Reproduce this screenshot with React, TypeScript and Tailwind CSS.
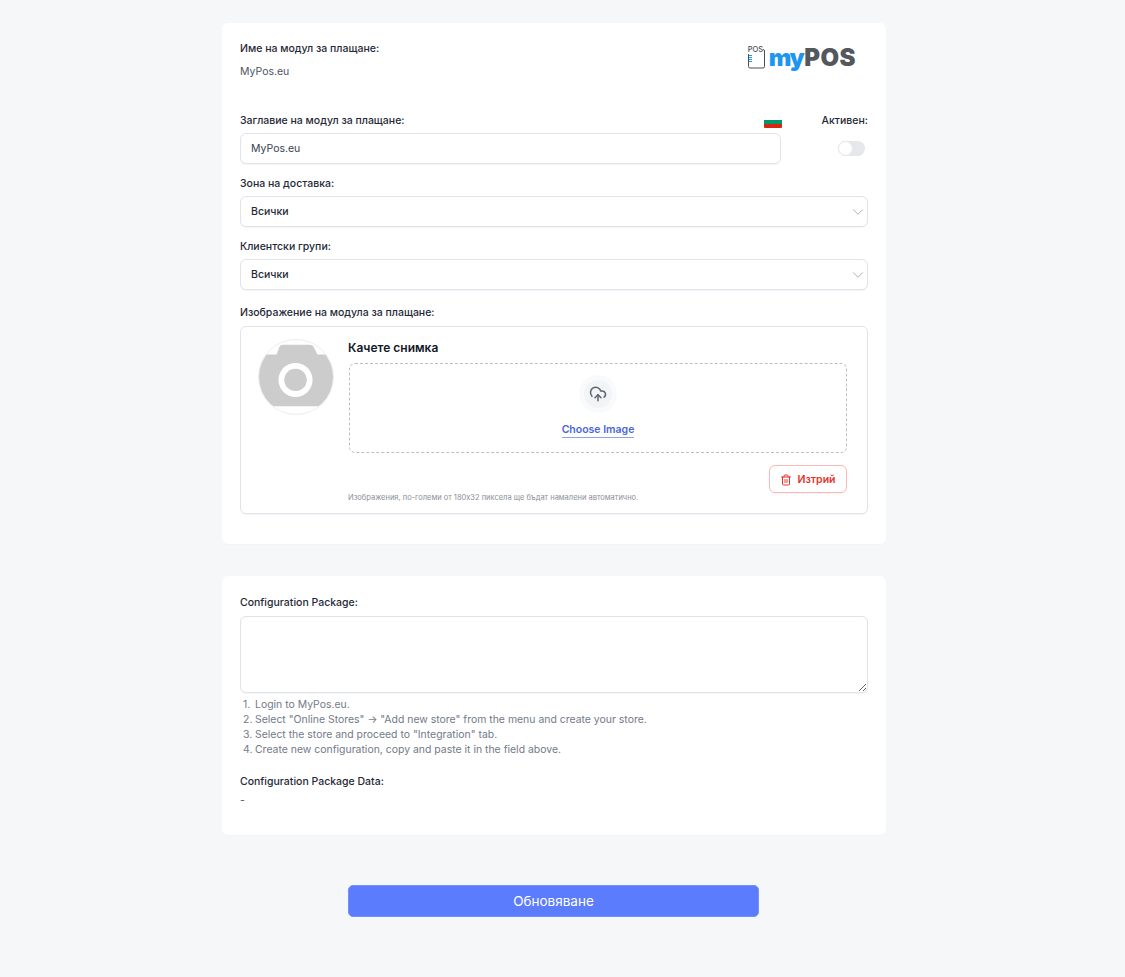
import { ChevronDown, CloudUpload, Trash2 } from 'lucide-react';

const steps = [
  'Login to MyPos.eu.',
  'Select "Online Stores" → "Add new store" from the menu and create your store.',
  'Select the store and proceed to "Integration" tab.',
  'Create new configuration, copy and paste it in the field above.',
];

function Label({ children }: { children: React.ReactNode }) {
  return <div className="h-[16px] text-[10.5px] leading-[18px] font-medium text-[#1f2937]">{children}</div>;
}

function SelectBox({ label }: { label: string }) {
  return (
    <div className="mb-[11px]">
      <Label>{label}</Label>
      <div className="mt-[5px] h-[31px] flex items-center justify-between pl-[10px] bg-white border border-[#e0e3eb] rounded-[6px] shadow-[0_1px_1px_rgba(0,0,0,0.04)]">
        <span className="text-[10.5px] font-medium text-[#1f2937]">Всички</span>
        <ChevronDown className="w-[18px] h-[18px] text-[#a9aeb8]" strokeWidth={1.3} />
      </div>
    </div>
  );
}

function Logo() {
  return (
    <div className="flex items-center self-start mr-[12px] mt-[4px]">
      <div className="relative w-[17px] h-[22px]">
        <svg viewBox="0 0 17 22" className="w-[17px] h-[22px]">
          <rect x="0.5" y="2.5" width="16" height="18.5" rx="1.5" fill="white" stroke="#4b4f54" strokeWidth="1" />
          <path d="M1 8.5H4M1 10.5H4M1 12.5H4M1 14.5H4" stroke="#2196f3" strokeWidth="1" />
        </svg>
        <span className="absolute left-0 top-[-1px] text-[7.5px] leading-[8px] font-medium text-[#4b4f54] bg-white">POS</span>
      </div>
      <span className="ml-[4px] text-[24px] leading-[28px] font-black tracking-[-1.5px] text-[#1e96f0]">my</span>
      <span className="ml-[1px] text-[24px] leading-[28px] font-black tracking-[0.5px] text-[#54575c]">POS</span>
    </div>
  );
}

function CameraAvatar() {
  return (
    <div className="w-[76px] h-[76px] rounded-full border border-[#eeeeee] shrink-0 overflow-hidden mt-[12px] ml-[17px]">
      <svg viewBox="0 0 76 76" className="w-full h-full">
        <path d="M0 15H18L21 7Q22 5 25 5H52Q55 5 56 7L60 15H76V68H0Z" fill="#cccccc" />
        <circle cx="37.5" cy="41" r="17.5" fill="white" />
        <circle cx="37.5" cy="41" r="11.5" fill="#cccccc" />
      </svg>
    </div>
  );
}

export default function App() {
  return (
    <div
      className="min-h-[977px] bg-[#f6f7f9] pt-[23px] text-[#1f2937]"
      style={{ fontFamily: 'Inter, "Noto Sans", sans-serif' }}
    >
      <div className="w-[664px] ml-[222px]">
        <section className="bg-white rounded-[6px] h-[521px] px-[18px] pt-[17px] shadow-[0_1px_2px_rgba(0,0,0,0.02)]">
          <div className="flex justify-between h-[64px]">
            <div>
              <Label>Име на модул за плащане:</Label>
              <div className="mt-[8px] text-[10.5px] leading-[16px] text-[#4b5563]">MyPos.eu</div>
            </div>
            <Logo />
          </div>

          <div className="mt-[8px] flex mb-[11px]">
            <div className="w-[541px]">
              <div className="flex justify-between items-end h-[16px]">
                <Label>Заглавие на модул за плащане:</Label>
                <div className="w-[18px] h-[11px] rounded-[1px] overflow-hidden mr-[-1px] flex flex-col shrink-0">
                  <div className="h-[3px] bg-white" />
                  <div className="h-[4px] bg-[#00966e]" />
                  <div className="h-[4px] bg-[#d62612]" />
                </div>
              </div>
              <div className="mt-[5px] h-[31px] flex items-center pl-[10px] bg-white border border-[#e0e3eb] rounded-[6px] shadow-[0_1px_1px_rgba(0,0,0,0.04)] text-[10.5px] text-[#374151]">
                MyPos.eu
              </div>
            </div>
            <div className="ml-auto flex flex-col items-end">
              <Label>Активен:</Label>
              <div className="mt-[13px] mr-[3px] w-[27px] h-[15px] rounded-full bg-[#e5e7eb] relative">
                <div className="absolute left-0 top-0 w-[15px] h-[15px] rounded-full bg-white border border-[#e5e7eb]" />
              </div>
            </div>
          </div>

          <SelectBox label="Зона на доставка:" />
          <SelectBox label="Клиентски групи:" />

          <div className="mt-[14px]">
            <Label>Изображение на модула за плащане:</Label>
          </div>
          <div className="mt-[6px] h-[188px] border border-[#e0e3eb] rounded-[6px] flex shadow-[0_1px_1px_rgba(0,0,0,0.04)]">
            <CameraAvatar />
            <div className="ml-[15px] w-[498px] pt-[12px]">
              <div className="-ml-[1px] text-[12px] leading-[18px] font-semibold text-[#111827]">Качете снимка</div>
              <div className="mt-[6px] h-[90px] border border-dashed border-[#b9c0cc] rounded-[6px] flex flex-col items-center pt-[11px]">
                <div className="w-[38px] h-[38px] rounded-full bg-[#f9fafb] flex items-center justify-center">
                  <div className="w-[28px] h-[28px] rounded-full bg-[#f3f4f6] flex items-center justify-center">
                    <CloudUpload className="w-[18px] h-[18px] text-[#5b6472]" strokeWidth={2} />
                  </div>
                </div>
                <span className="mt-[10px] text-[10.5px] leading-[14px] font-semibold text-[#4a67d6] border-b border-[#8fa2e8]">
                  Choose Image
                </span>
              </div>
              <div className="flex justify-end mt-[12px]">
                <div className="w-[78px] h-[28px] pt-[1px] flex items-center justify-center gap-[5px] border border-[#fbb9b5] rounded-[6px] shadow-[0_1px_1px_rgba(0,0,0,0.05)] text-[10.5px] font-semibold text-[#e5352b]">
                  <Trash2 className="w-[12px] h-[12px]" strokeWidth={2} />
                  Изтрий
                </div>
              </div>
              <div className="-ml-[1px] text-[7.5px] leading-[10px] text-[#8b8f98]">
                Изображения, по-големи от 180x32 пиксела ще бъдат намалени автоматично.
              </div>
            </div>
          </div>
        </section>

        <section className="mt-[32px] bg-white rounded-[6px] h-[259px] px-[18px] pt-[18px] shadow-[0_1px_2px_rgba(0,0,0,0.02)]">
          <Label>Configuration Package:</Label>
          <textarea className="block mt-[6px] w-full h-[77px] bg-white border border-[#e0e3eb] rounded-[6px] shadow-[0_1px_1px_rgba(0,0,0,0.04)]" />
          <ol className="mt-[4px] text-[10.45px] leading-[15px] text-[#737a88]">
            {steps.map((step, index) => (
              <li key={step} className="flex">
                <span className="w-[15px] pl-[3px] shrink-0">{index + 1}.</span>
                {step}
              </li>
            ))}
          </ol>
          <div className="mt-[16px]">
            <Label>Configuration Package Data:</Label>
          </div>
          <div className="mt-[4px] text-[10.5px] leading-[16px] text-[#4b5563]">-</div>
        </section>

        <div className="mt-[50px] flex justify-center">
          <button className="w-[411px] h-[32px] mr-[1px] rounded-[5px] bg-[#5b7cfd] border border-[#7390fd] text-white text-[13.5px]">Обновяване</button>
        </div>
      </div>
    </div>
  );
}
